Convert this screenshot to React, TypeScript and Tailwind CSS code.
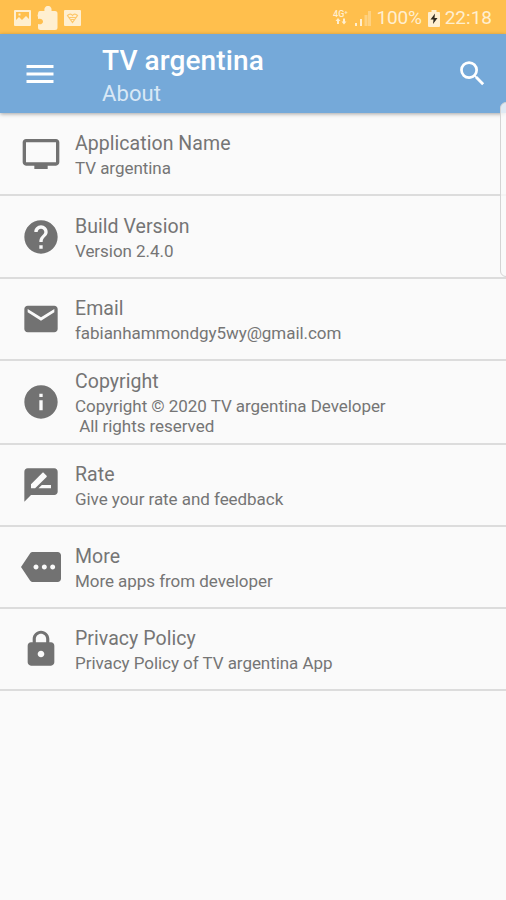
import { MdEmail, MdHelp, MdInfo, MdLock, MdMenu, MdMore, MdRateReview, MdSearch } from 'react-icons/md';

function TvIcon({ className }: { className?: string }) {
  return (
    <svg viewBox="0 0 24 24" fill="currentColor" className={className}>
      <path d="M21 3H3c-1.1 0-2 .9-2 2v12c0 1.1.9 2 2 2h5v2h8v-2h5c1.1 0 1.99-.9 1.99-2L23 5c0-1.1-.9-2-2-2zm0 14H3V5h18v12z" />
    </svg>
  );
}

const items = [
  {
    title: 'Application Name',
    lines: ['TV argentina'],
    icon: TvIcon,
    className: 'h-[83px]',
  },
  {
    title: 'Build Version',
    lines: ['Version 2.4.0'],
    icon: MdHelp,
    className: 'h-[83px]',
  },
  {
    title: 'Email',
    lines: ['fabianhammondgy5wy@gmail.com'],
    icon: MdEmail,
    className: 'h-[82px]',
  },
  {
    title: 'Copyright',
    lines: ['Copyright © 2020 TV argentina Developer', ' All rights reserved'],
    icon: MdInfo,
    className: 'h-[84px]',
  },
  {
    title: 'Rate',
    lines: ['Give your rate and feedback'],
    icon: MdRateReview,
    className: 'h-[82px]',
  },
  {
    title: 'More',
    lines: ['More apps from developer'],
    icon: MdMore,
    className: 'h-[82px]',
  },
  {
    title: 'Privacy Policy',
    lines: ['Privacy Policy of TV argentina App'],
    icon: MdLock,
    className: 'h-[82px]',
  },
];

function StatusBar() {
  return (
    <div className="flex h-[34px] items-center bg-[#ffbf4d] pt-[2px] pl-[14px] pr-[14px] text-[#ffefd0]">
      <svg viewBox="0 0 17 16" className="h-4 w-[17px]" fill="currentColor">
        <path
          fillRule="evenodd"
          d="M1 0h15q1 0 1 1v14q0 1-1 1H1q-1 0-1-1V1q0-1 1-1zM2 2v8l3-3 3 3 4-4 3 3V2zM4.500 3.500h2v2h-2z"
        />
      </svg>
      <svg viewBox="0 0 22 25" className="ml-[6px] h-[25px] w-[22px]" fill="currentColor">
        <path d="M3 5h4.500C7 2 8.500 0 11 0s4 2 3.500 5H18q2.500 0 2.500 2.500v14Q20.500 24 18 24H3.500Q1 24 1 21.500V18c2.500 1 5-.2 5-2.500s-2.500-3.500-5-2.500V11Q0 9.500 1 8q0-3 2-3z" />
      </svg>
      <svg viewBox="0 0 17 16" className="ml-[5px] h-4 w-[17px]">
        <rect width="17" height="16" rx="1" fill="currentColor" />
        <path
          d="M3.500 5.500c2-2.200 4-1.500 5 0 1-1.500 3-2.200 5 0L8.500 12.500zM5 7.500h7M7 9.500h3"
          fill="none"
          stroke="#fdc76a"
          strokeWidth="1.200"
        />
      </svg>
      <div className="ml-auto flex items-center">
        <div className="flex h-4 w-[18px] flex-col items-center">
          <span className="text-[9px] leading-[8px] font-medium">4G⁺</span>
          <svg viewBox="0 0 12 7" className="h-[7px] w-3" fill="currentColor">
            <path d="M3 0l2.500 3H4v3H2V3H.5zM9 6.500L6.500 3.500H8v-3h2v3h1.500z" />
          </svg>
        </div>
        <svg viewBox="0 0 16 16" className="ml-[5px] h-4 w-4" fill="currentColor">
          <path d="M0 13h2v3H0zM5 9h2v7H5z" />
          <path d="M9.500 5h3v11h-3zM13 1h3v15h-3z" opacity=".4" />
        </svg>
        <span className="ml-[6px] text-[19px] leading-5 tracking-[-0.2px]">100%</span>
        <svg viewBox="0 0 12 17" className="ml-[6px] h-[17px] w-3">
          <path d="M3.500 0h5v2H11q1 0 1 1v13q0 1-1 1H1q-1 0-1-1V3q0-1 1-1h2.500z" fill="currentColor" />
          <path d="M7 3.500L2.500 9.500h3L5 14l4.500-6h-3z" fill="#2f2a20" />
        </svg>
        <span className="ml-[5px] text-[19px] leading-5">22:18</span>
      </div>
    </div>
  );
}

export default function App() {
  return (
    <div className="relative h-[900px] w-[506px] overflow-hidden bg-[#fafafa] font-['Roboto',sans-serif]">
      <StatusBar />
      <header className="relative flex h-[79px] items-center bg-[#75a9d9] pr-[17px] pl-[22px] text-white shadow-[0_1px_4px_rgba(0,0,0,0.35)]">
        <MdMenu className="size-[36px]" />
        <div className="ml-[44px] pt-[6px]">
          <h1 className="text-[28px] leading-[33px] font-medium tracking-[0.1px]">TV argentina</h1>
          <p className="text-[22px] leading-[33px] tracking-[0.1px] text-[#d9e8f6]">About</p>
        </div>
        <MdSearch className="ml-auto size-[33px]" />
      </header>
      <ul>
        {items.map((item) => (
          <li
            key={item.title}
            className={`flex items-center border-b-2 border-[#dcdcdc] pl-[21px] text-[#757575] ${item.className}`}
          >
            <item.icon className="size-[40px] shrink-0 text-[#727272]" />
            <div className="ml-[14px]">
              <h2 className="text-[19.5px] leading-[26px] tracking-[0.05px] whitespace-nowrap">{item.title}</h2>
              {item.lines.map((line) => (
                <p key={line} className="relative top-px text-[17px] leading-5 tracking-[-0.05px] whitespace-pre">
                  {line}
                </p>
              ))}
            </div>
          </li>
        ))}
      </ul>
      {/* edge panel handle */}
      <div className="absolute top-[102px] -right-[6px] h-[175px] w-3 rounded-lg border border-[#d4d4d4] bg-[#fafafa]/80" />
    </div>
  );
}
